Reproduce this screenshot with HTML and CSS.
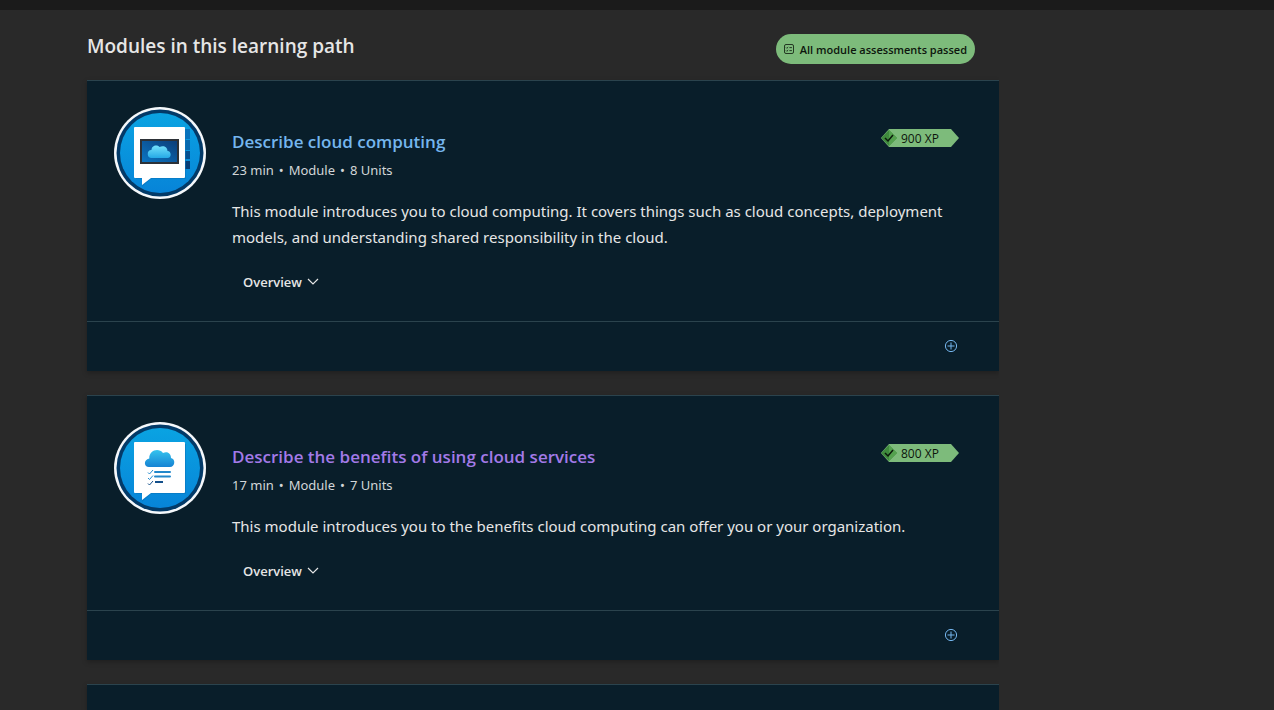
FILE: index.html
```html
<!DOCTYPE html>
<html lang="en">
<head>
<meta charset="utf-8">
<meta name="viewport" content="width=device-width, initial-scale=1">
<title>Modules in this learning path</title>
<link rel="stylesheet" href="styles.css">
</head>
<body>
<svg class="defs" aria-hidden="true">
  <defs>
    <linearGradient id="disc" x1="0" y1="0" x2="0" y2="1"><stop offset="0" stop-color="#0aa3e2"/><stop offset="1" stop-color="#0784d8"/></linearGradient>
    <linearGradient id="cloud" x1="0" y1="0" x2="0" y2="1"><stop offset="0" stop-color="#35c3ee"/><stop offset="1" stop-color="#1683d3"/></linearGradient>
    <linearGradient id="cloud-light" x1="0" y1="0" x2="0" y2="1"><stop offset="0" stop-color="#74e1fb"/><stop offset="1" stop-color="#25a9e6"/></linearGradient>
    <linearGradient id="screen" x1="0" y1="1" x2="1" y2="0"><stop offset="0" stop-color="#0b75c3"/><stop offset="1" stop-color="#0c3e79"/></linearGradient>
    <symbol id="badge-base" viewBox="0 0 92 92">
      <circle cx="46" cy="46" r="46" fill="#f5f8fb"/>
      <circle cx="46" cy="46" r="43.500" fill="#033a68"/>
      <circle cx="46" cy="46" r="40" fill="url(#disc)"/>
    </symbol>
    <symbol id="xp-check" viewBox="0 0 16 18">
      <path d="M8 1l8 8-8 8-8-8z" fill="#3f8a3d"/>
      <path d="M8 1l8 8-8 8z" fill="#54a14f"/>
      <path d="M4 9l3 3 5-6" fill="none" stroke="#0b1a0b" stroke-width="1.5"/>
    </symbol>
    <symbol id="chevron" viewBox="0 0 12 12">
      <path d="M1 3l5 5 5-5" fill="none" stroke="currentColor" stroke-width="1.2"/>
    </symbol>
    <symbol id="plus" viewBox="0 0 14 14">
      <circle cx="7" cy="7" r="5.6" fill="none" stroke="currentColor"/>
      <path d="M7 3.5v7M3.5 7h7" stroke="currentColor"/>
    </symbol>
  </defs>
</svg>
<div class="topbar"></div>
<main class="content">
  <header class="heading">
    <h2 class="heading-title">Modules in this learning path</h2>
    <span class="passed">
      <svg class="passed-icon" viewBox="0 0 10 10" aria-hidden="true" fill="none" stroke="currentColor" stroke-width=".8"><rect x=".5" y=".5" width="9" height="9" rx="1.5"/><path d="M2 3.5l.8.8L4.2 3M5.4 3.6h2.5M2 6.5l.8.8L4.2 6M5.4 6.6h2.5"/></svg>
      All module assessments passed
    </span>
  </header>

  <article class="card">
    <div class="card-body">
      <svg class="badge" viewBox="0 0 92 92" aria-hidden="true">
        <use href="#badge-base"/>
        <path d="M70 22h6v10h-6z" fill="#0873bd"/><path d="M70 33h6v10h-6z" fill="#0868ae"/><path d="M70 44h6v8h-6z" fill="#07508f"/><path d="M70 54h6v8h-6z" fill="#073d75"/>
        <path d="M23 22h49v50H37l-9 8v-8h-6V22z" fill="#0874bd" opacity=".6"/>
        <path d="M21 20h49a1 1 0 0 1 1 1v49a1 1 0 0 1-1 1H37l-9 7v-7h-7a1 1 0 0 1-1-1V21a1 1 0 0 1 1-1z" fill="#fff"/>
        <path d="M26 32h39v25H26z" fill="#2d3137"/>
        <path d="M28 34h35v21H28z" fill="url(#screen)"/>
        <path d="M38 51a4 4 0 0 1-.5-8c0-4 5-6 8-3 4-2 8 0 8 4 4 0 4.500 7 0 7z" fill="url(#cloud-light)"/>
      </svg>
      <div class="details">
        <div class="title-row">
          <h3 class="title"><a class="title-link" href="#cloud-computing">Describe cloud computing</a></h3>
          <span class="xp"><svg class="xp-icon" aria-hidden="true"><use href="#xp-check"/></svg>900 XP</span>
        </div>
        <p class="meta"><span>23 min</span><span>•</span><span>Module</span><span>•</span><span>8 Units</span></p>
        <p class="description">This module introduces you to cloud computing. It covers things such as cloud concepts, deployment models, and understanding shared responsibility in the cloud.</p>
        <button class="overview" type="button">Overview<svg class="chevron" aria-hidden="true"><use href="#chevron"/></svg></button>
      </div>
    </div>
    <footer class="card-footer"><button class="add" type="button" aria-label="Add"><svg class="add-icon" aria-hidden="true"><use href="#plus"/></svg></button></footer>
  </article>

  <article class="card">
    <div class="card-body">
      <svg class="badge" viewBox="0 0 92 92" aria-hidden="true">
        <use href="#badge-base"/>
        <path d="M23 22h49v50H37l-9 8v-8h-6V22z" fill="#0874bd" opacity=".6"/>
        <path d="M21 20h49a1 1 0 0 1 1 1v49a1 1 0 0 1-1 1H37l-9 7v-7h-7a1 1 0 0 1-1-1V21a1 1 0 0 1 1-1z" fill="#fff"/>
        <path d="M35 45c-5 0-6-7 .3-8.500C35 29 44 25 49 31c5-2 8 1 8 5 5 1 4 9-1 9z" fill="url(#cloud)"/>
        <path d="M41 50h15M41 54.500h15" stroke="#2287ca" stroke-width="2" stroke-linecap="round"/>
        <path d="M41 60h8" stroke="#14508b" stroke-width="2"/>
        <path d="M34 50.500l1.500 1.500 3.500-4M34 56l1.500 1.500 3.500-4" fill="none" stroke="#238bd0"/>
        <path d="M34 61.500l1.500 1.500 3.500-4" fill="none" stroke="#14508b"/>
      </svg>
      <div class="details">
        <div class="title-row">
          <h3 class="title"><a class="title-link title-link-visited" href="#benefits">Describe the benefits of using cloud services</a></h3>
          <span class="xp"><svg class="xp-icon" aria-hidden="true"><use href="#xp-check"/></svg>800 XP</span>
        </div>
        <p class="meta"><span>17 min</span><span>•</span><span>Module</span><span>•</span><span>7 Units</span></p>
        <p class="description">This module introduces you to the benefits cloud computing can offer you or your organization.</p>
        <button class="overview" type="button">Overview<svg class="chevron" aria-hidden="true"><use href="#chevron"/></svg></button>
      </div>
    </div>
    <footer class="card-footer"><button class="add" type="button" aria-label="Add"><svg class="add-icon" aria-hidden="true"><use href="#plus"/></svg></button></footer>
  </article>

  <article class="card card-last">
    <div class="card-body">
      <svg class="badge" viewBox="0 0 92 92" aria-hidden="true"><use href="#badge-base"/></svg>
    </div>
  </article>
</main>
</body>
</html>
```
FILE: styles.css
```css
* { box-sizing: border-box; }

body {
  display: flex;
  flex-direction: column;
  height: 100vh;
  margin: 0;
  overflow: hidden;
  background: #292929;
  color: #e6e6e6;
  font-family: "Segoe UI", "Open Sans", "Noto Sans", sans-serif;
}

h2, h3, p { margin: 0; }

button {
  border: 0;
  background: transparent;
  color: inherit;
  font: inherit;
}

.defs { position: absolute; width: 0; height: 0; }

.topbar { flex: none; height: 10px; background: #1b1b1b; }

.content {
  display: flex;
  flex: 1;
  flex-direction: column;
  min-height: 0;
  max-width: 999px;
  padding-left: 87px;
  overflow: hidden;
}

.heading {
  display: flex;
  flex: none;
  justify-content: space-between;
  align-items: flex-start;
  padding: 24px 24px 16px 0;
}

.heading-title {
  font-size: 19px;
  font-weight: 600;
  line-height: 24px;
}

.passed {
  display: flex;
  align-items: center;
  gap: 6px;
  height: 30px;
  padding: 0 8px;
  border-radius: 15px;
  background: #7dbb7b;
  color: #0d160d;
  font-size: 11px;
  font-weight: 600;
  white-space: nowrap;
}

.passed-icon { width: 10px; height: 10px; }

.card {
  flex: none;
  margin-bottom: 24px;
  border-top: 1px solid #2b434d;
  background: #091e2a;
  box-shadow: 0 2px 5px rgba(0, 0, 0, 0.25);
}

.card-last {
  flex: 1 1 0;
  min-height: 0;
  margin-bottom: 0;
  overflow: hidden;
}

.card-body {
  display: flex;
  align-items: flex-start;
  gap: 26px;
  padding: 26px 40px 19px 27px;
}

.badge { flex: none; width: 92px; height: 92px; }

.details { flex: 1; padding-top: 22px; }

.title-row {
  display: flex;
  justify-content: space-between;
  align-items: flex-start;
}

.title {
  font-size: 17px;
  font-weight: 600;
  line-height: 26px;
}

.title-link { color: #75b6ee; text-decoration: none; }
.title-link-visited { color: #a37ae8; }

.xp {
  display: flex;
  align-items: center;
  gap: 4px;
  width: 78px;
  height: 18px;
  background: #7dbb7b;
  clip-path: polygon(0 50%, 8px 0, 70px 0, 100% 50%, 70px 100%, 8px 100%);
  color: #0d160d;
  font-size: 12px;
}

.xp-icon { width: 16px; height: 18px; }

.meta {
  display: flex;
  gap: 5px;
  padding-top: 5px;
  font-family: "Segoe UI", "Noto Sans", sans-serif;
  font-size: 13px;
  line-height: 20px;
  color: #d2d6d8;
}

.description {
  padding-top: 18px;
  font-family: "Segoe UI", "Noto Sans", sans-serif;
  font-size: 15px;
  line-height: 26px;
}

.overview {
  display: flex;
  align-items: center;
  gap: 5px;
  height: 40px;
  margin-top: 12px;
  padding: 0 11px;
  font-size: 13px;
  font-weight: 600;
}

.chevron { width: 12px; height: 12px; }

.card-footer {
  display: flex;
  justify-content: flex-end;
  align-items: center;
  height: 50px;
  padding: 0 41px 2px 0;
  border-top: 1px solid #2b434d;
}

.add { display: flex; padding: 0; color: #75b6ee; }
.add-icon { width: 14px; height: 14px; }
```
